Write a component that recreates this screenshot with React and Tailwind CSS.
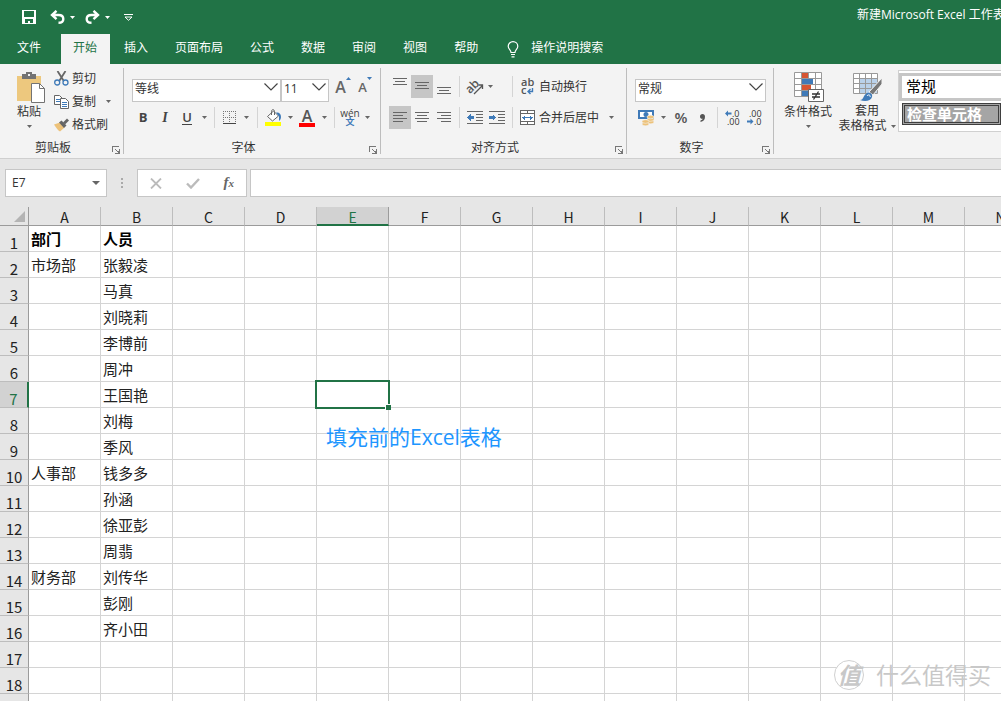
import { useState } from 'react';

const tabs = ['文件', '开始', '插入', '页面布局', '公式', '数据', '审阅', '视图', '帮助'];
const columns = ['A', 'B', 'C', 'D', 'E', 'F', 'G', 'H', 'I', 'J', 'K', 'L', 'M', 'N'];
const rows = [
  ['部门', '人员'],
  ['市场部', '张毅凌'],
  ['', '马真'],
  ['', '刘晓莉'],
  ['', '李博前'],
  ['', '周冲'],
  ['', '王国艳'],
  ['', '刘梅'],
  ['', '季风'],
  ['人事部', '钱多多'],
  ['', '孙涵'],
  ['', '徐亚彭'],
  ['', '周翡'],
  ['财务部', '刘传华'],
  ['', '彭刚'],
  ['', '齐小田'],
  [],
  [],
  [],
];

function Arrow({ className = '' }) {
  return (
    <svg className={`shrink-0 ${className}`} width="5" height="3" viewBox="0 0 5 3" fill="currentColor">
      <path d="M0 0h5L2.5 3z" />
    </svg>
  );
}

function ArrowButton({ label, className = 'w-3' }) {
  return (
    <button aria-label={label} className={`flex h-full shrink-0 items-center justify-center text-[#666] ${className}`}>
      <Arrow />
    </button>
  );
}

function ToolButton({ label, className = 'w-[22px]', children }) {
  return (
    <button aria-label={label} className={`flex h-full shrink-0 items-center justify-center ${className}`}>
      {children}
    </button>
  );
}

function Divider({ className = '' }) {
  return <div className={`h-[21px] w-px shrink-0 bg-[#d4d4d4] ${className}`} />;
}

function Combo({ label, value, options, className }) {
  return (
    <div className={`relative h-[23px] shrink-0 ${className}`}>
      <select
        aria-label={label}
        defaultValue={value}
        className="h-full w-full appearance-none border border-[#c6c6c6] bg-white pb-[3px] pl-0.5 text-xs leading-[18px] text-[#333]"
      >
        {options.map((option) => (
          <option key={option}>{option}</option>
        ))}
      </select>
      <svg
        className="pointer-events-none absolute right-[3px] top-[8px]"
        width="14"
        height="8"
        viewBox="0 0 14 8"
        fill="none"
        stroke="#444"
        strokeWidth="1.2"
      >
        <path d="M.5 .5 7 7 13.500 .5" />
      </svg>
    </div>
  );
}

function Group({ title, className, children }) {
  return (
    <section className={`flex shrink-0 flex-col ${className}`}>
      <div className="h-[75px]">{children}</div>
      <div className="flex h-[17px] items-center pr-[3px]">
        <h2 className="flex-1 text-center text-xs text-[#333]">{title}</h2>
        <button aria-label={`${title}设置`} className="mt-1 w-[14px]">
          <svg className="ml-auto" width="8" height="8" viewBox="0 0 8 8" fill="none" stroke="#777" shapeRendering="crispEdges">
            <path d="M.5 6V.5H7" />
            <path d="M3 3l3 3M7.500 3v4.500H3M6.500 5v2" />
          </svg>
        </button>
      </div>
    </section>
  );
}

function GroupLine() {
  return <div className="mt-1 h-[86px] w-px shrink-0 bg-[#bdbdbd]" />;
}

function Lines({ d }) {
  return (
    <svg width="14" height="13" viewBox="0 0 14 13" stroke="#666" shapeRendering="crispEdges">
      <path d={d} />
    </svg>
  );
}

function TitleBar() {
  return (
    <div className="flex h-[34px] items-center overflow-hidden pl-[22px]">
      <button aria-label="保存" className="mr-[14px]">
        <svg width="14" height="14" viewBox="0 0 14 14" fill="#fff" shapeRendering="crispEdges">
          <path fillRule="evenodd" d="M0 0h14v14H0zM2 1v6h10V1zM3 9v4h3v-2h2v2h3V9z" />
        </svg>
      </button>
      <button aria-label="撤销" className="mr-[5px]">
        <svg width="15" height="14" viewBox="0 0 15 14" fill="none" stroke="#fff" strokeWidth="2.400">
          <path d="M6.500 .8 2 5l4.500 4.200M2 5h6.500c3 0 4.800 1.500 4.800 4S11.500 12.800 8.500 12.800" />
        </svg>
      </button>
      <Arrow className="mr-[10px] text-white" />
      <button aria-label="恢复" className="mr-[5px]">
        <svg width="15" height="14" viewBox="0 0 15 14" fill="none" stroke="#fff" strokeWidth="2.400">
          <path d="M8.500 .8 13 5 8.500 9.200M13 5H6.500C3.500 5 1.700 6.500 1.700 9S3.500 12.800 6.500 12.800" />
        </svg>
      </button>
      <Arrow className="mr-[14px] text-white" />
      <button aria-label="自定义快速访问工具栏">
        <svg width="9" height="7" viewBox="0 0 9 7" fill="none" stroke="#fff">
          <path d="M0 .5h9M1 3h7L4.500 6.300z" />
        </svg>
      </button>
      <div className="ml-auto w-36 overflow-hidden whitespace-nowrap pb-1 text-xs text-white">
        新建Microsoft Excel 工作表
      </div>
    </div>
  );
}

function TabBar() {
  const [active, setActive] = useState('开始');

  return (
    <nav className="flex h-[30px] gap-0.5 pl-[5px] text-xs text-white">
      {tabs.map((tab) => (
        <button
          key={tab}
          onClick={() => setActive(tab)}
          className={`shrink-0 pb-0.5 pl-3 pr-[13px] first:mr-[5px] ${
            tab === active ? 'bg-[#f3f3f3] text-[#217346]' : ''
          }`}
        >
          {tab}
        </button>
      ))}
      <button className="ml-[14px] flex shrink-0 items-center gap-3 pb-0.5">
        <svg className="mt-[3px]" width="12" height="17" viewBox="0 0 12 17" fill="none" stroke="#fff" strokeWidth="1.200">
          <path d="M4 11.500C4 9 1.200 8.200 1.200 5.200a4.800 4.600 0 0 1 9.600 0c0 3-2.800 3.800-2.800 6.300zM4 13.500h4M4.500 15.800h3" />
        </svg>
        操作说明搜索
      </button>
    </nav>
  );
}

function ClipboardGroup() {
  return (
    <Group title="剪贴板" className="w-[123px]">
      <div className="flex pl-3">
        <button className="flex w-[34px] flex-col items-center pt-2 text-xs text-[#333]">
          <svg className="ml-[3px]" width="28" height="31" viewBox="0 0 28 31">
            <path d="M0 4h24v25H0z" fill="#edc87e" />
            <path d="M5 2h4V0h6v2h4v5H5z" fill="#737373" />
            <path d="M11 2h2v2h-2z" fill="#f3f3f3" />
            <path d="M14.500 11.500h8l5 5v14h-13z" fill="#fff" stroke="#737373" />
            <path d="M22.500 11.500v5h5" fill="none" stroke="#737373" />
          </svg>
          <span className="leading-[18px]">粘贴</span>
          <Arrow className="mt-1 text-[#666]" />
        </button>
        <div className="flex flex-col pl-2 pt-[3px] text-xs text-[#333]">
          <button className="flex h-[23px] items-center gap-[3px]">
            <svg width="15" height="15" viewBox="0 0 15 15" fill="none">
              <path d="M3.500 0 9.800 10M11.500 0 5.200 10" stroke="#666" strokeWidth="1.800" />
              <circle cx="3.200" cy="11.500" r="2.500" stroke="#3f7ab8" strokeWidth="1.300" />
              <circle cx="11.500" cy="11.500" r="2.500" stroke="#3f7ab8" strokeWidth="1.300" />
            </svg>
            剪切
          </button>
          <div className="flex h-[23px] items-center">
            <button className="flex items-center gap-[3px]">
              <svg width="15" height="14" viewBox="0 0 15 14" fill="#fff" stroke="#666">
                <path d="M.5.500h5l3 3v6h-8z" />
                <path d="M2 4.500h4M2 6.500h4" stroke="#3f7ab8" />
                <path d="M6.500 3.500h5l3 3v7h-8z" />
                <path d="M8 7.500h5M8 9.500h5M8 11.500h5" stroke="#3f7ab8" />
              </svg>
              复制
            </button>
            <ArrowButton label="复制选项" className="ml-[6px] w-3" />
          </div>
          <button className="flex h-[23px] items-center gap-[3px]">
            <svg width="15" height="14" viewBox="0 0 15 14">
              <path d="M0 6.500 6 4.500l4.500 5L6 13.500C4 12.500 2 9.500 0 6.500z" fill="#edc27a" />
              <path d="M5 4.500 7.500 2.500l5 5L10 10z" fill="#666" />
              <path d="M9 4.500 13 .5 15 2.500l-4 4z" fill="#666" />
            </svg>
            格式刷
          </button>
        </div>
      </div>
    </Group>
  );
}

function FontGroup() {
  return (
    <Group title="字体" className="w-[256px]">
      <div className="flex flex-col gap-2 pl-2 pt-[11px] text-[#444]">
        <div className="flex h-[23px] items-center">
          <Combo label="字体" value="等线" options={['等线', '宋体', '黑体']} className="w-[149px]" />
          <Combo label="字号" value="11" options={['10', '11', '12', '14']} className="w-12" />
          <ToolButton label="增大字号" className="ml-[3px] w-[22px]">
            <span className="text-base font-semibold leading-5 text-[#666]">A</span>
            <svg className="mb-4" width="5" height="3" viewBox="0 0 5 3" fill="#3f7ab8">
              <path d="M0 3h5L2.500 0z" />
            </svg>
          </ToolButton>
          <ToolButton label="减小字号">
            <span className="text-[13px] font-semibold leading-5 text-[#666]">A</span>
            <svg className="mb-4" width="5" height="3" viewBox="0 0 5 3" fill="#3f7ab8">
              <path d="M0 0h5L2.500 3z" />
            </svg>
          </ToolButton>
        </div>
        <div className="flex h-[23px] items-center">
          <ToolButton label="加粗">
            <span className="text-[13px] font-bold">B</span>
          </ToolButton>
          <ToolButton label="倾斜">
            <span className="font-['Liberation_Serif',serif] text-sm font-bold italic">I</span>
          </ToolButton>
          <ToolButton label="下划线">
            <span className="border-b border-[#444] text-[13px] font-semibold leading-[14px]">U</span>
          </ToolButton>
          <ArrowButton label="下划线选项" />
          <Divider className="ml-[4px] mr-[3px]" />
          <ToolButton label="边框">
            <svg width="13" height="13" viewBox="0 0 13 13" fill="none" stroke="#777" shapeRendering="crispEdges">
              <path d="M0 .5h13M0 6.500h13M.5 0v12M6.500 0v12M12.500 0v12" strokeDasharray="1 1" />
              <path d="M0 12.500h13" stroke="#444" />
            </svg>
          </ToolButton>
          <ArrowButton label="边框选项" />
          <Divider className="ml-[5px] mr-[4px]" />
          <ToolButton label="填充颜色">
            <svg width="17" height="17" viewBox="0 0 17 17" fill="none">
              <path d="M2.500 7.500 8.500 2l5 5-6 5z" fill="#fff" stroke="#666" />
              <path d="M6.500 6V2.500c0-2.500 3-2.500 3 0V6" stroke="#666" />
              <path d="M11 3.500c3-.5 5 1 5 4.500 0 2-1 3-2 4V7.500z" fill="#3f7ab8" />
              <path d="M0 13h16v4H0z" fill="#ff0" />
            </svg>
          </ToolButton>
          <ArrowButton label="填充颜色选项" />
          <ToolButton label="字体颜色">
            <span className="border-b-4 border-[#f00] px-[3px] text-base font-semibold leading-[14px] text-[#555]">A</span>
          </ToolButton>
          <ArrowButton label="字体颜色选项" />
          <Divider className="ml-[4px] mr-[4px]" />
          <ToolButton label="拼音指南" className="w-[22px] flex-col">
            <span className="text-[10px] leading-[8px]">wén</span>
            <span className="text-[9px] font-bold leading-[10px] text-[#3f7ab8]">文</span>
          </ToolButton>
          <ArrowButton label="拼音选项" />
        </div>
      </div>
    </Group>
  );
}

function AlignGroup() {
  return (
    <Group title="对齐方式" className="w-[245px]">
      <div className="flex flex-col gap-2 pl-2 pt-[11px] text-xs text-[#333]">
        <div className="flex h-[23px] items-center">
          <ToolButton label="顶端对齐">
            <svg width="14" height="17" viewBox="0 0 14 17" stroke="#666" shapeRendering="crispEdges">
              <path d="M0 .5h14M2 3.500h10M0 6.500h14" />
            </svg>
          </ToolButton>
          <ToolButton label="垂直居中" className="w-[22px] bg-[#c6c6c6]">
            <Lines d="M0 2.500h14M2 5.500h10M0 8.500h14" />
          </ToolButton>
          <ToolButton label="底端对齐">
            <svg width="14" height="15" viewBox="0 0 14 15" stroke="#666" shapeRendering="crispEdges">
              <path d="M0 8.500h14M2 11.500h10M0 14.500h14" />
            </svg>
          </ToolButton>
          <Divider className="ml-[4px] mr-[4px]" />
          <ToolButton label="方向">
            <svg className="overflow-visible" width="18" height="16" viewBox="0 0 18 16" fill="none" stroke="#555">
              <text x="0" y="12" transform="rotate(-45 6 9)" fontSize="12" fontWeight="600" fill="#555" stroke="none">
                ab
              </text>
              <path d="M8 15 16 7M12.500 6h4v4" strokeWidth="1.300" />
            </svg>
          </ToolButton>
          <ArrowButton label="方向选项" className="-ml-0.5 w-3" />
          <Divider className="ml-[16px] mr-[7px]" />
          <button className="flex h-full items-center gap-[3px]">
            <svg className="overflow-visible" width="16" height="16" viewBox="0 0 16 16" fill="none">
              <text x="1" y="7" fontSize="11" fontWeight="600" fill="#555">ab</text>
              <text x="1" y="15" fontSize="11" fontWeight="600" fill="#555">c</text>
              <path d="M12.500 9v3.500H8M10.500 10 8 12.500l2.500 2.500" stroke="#3f7ab8" strokeWidth="1.400" />
            </svg>
            自动换行
          </button>
        </div>
        <div className="flex h-[23px] items-center">
          <ToolButton label="左对齐" className="w-[22px] bg-[#c6c6c6]">
            <Lines d="M0 1.500h14M0 4.500h10M0 7.500h14M0 10.500h10" />
          </ToolButton>
          <ToolButton label="居中">
            <Lines d="M0 1.500h14M2 4.500h10M0 7.500h14M2 10.500h10" />
          </ToolButton>
          <ToolButton label="右对齐">
            <Lines d="M0 1.500h14M4 4.500h10M0 7.500h14M4 10.500h10" />
          </ToolButton>
          <Divider className="ml-[4px] mr-[4px]" />
          <ToolButton label="减少缩进量">
            <svg width="16" height="13" viewBox="0 0 16 13" stroke="#666" shapeRendering="crispEdges">
              <path d="M0 .5h16M9 3.500h7M9 6.500h7M9 9.500h7M0 12.500h16" />
              <path d="M0 6.500 4 3v2h3v3H4v2z" fill="#3f7ab8" stroke="none" />
            </svg>
          </ToolButton>
          <ToolButton label="增加缩进量">
            <svg width="16" height="13" viewBox="0 0 16 13" stroke="#666" shapeRendering="crispEdges">
              <path d="M0 .5h16M9 3.500h7M9 6.500h7M9 9.500h7M0 12.500h16" />
              <path d="M7 6.500 4 3v2H0v3h4v2z" fill="#3f7ab8" stroke="none" />
            </svg>
          </ToolButton>
          <Divider className="ml-[4px] mr-[7px]" />
          <button className="flex h-full items-center gap-1">
            <svg width="15" height="15" viewBox="0 0 15 15" fill="#fff" stroke="#666" shapeRendering="crispEdges">
              <path d="M.5.500h14v14H.5zM.5 3.500h14M.5 11.500h14M7.500.500v3M7.500 11.500v3" />
              <path d="M2 7.500h11M4.500 5.500v4M10.500 5.500v4M3.500 6.500v2M11.500 6.500v2" stroke="#3f7ab8" />
            </svg>
            合并后居中
          </button>
          <ArrowButton label="合并选项" className="ml-[6px] w-3" />
        </div>
      </div>
    </Group>
  );
}

function NumberGroup() {
  return (
    <Group title="数字" className="w-[146px]">
      <div className="flex flex-col gap-2 pl-2 pt-[11px] text-[#555]">
        <Combo label="数字格式" value="常规" options={['常规', '数字', '货币']} className="w-[131px]" />
        <div className="flex h-[23px] items-center">
          <ToolButton label="会计数字格式">
            <svg width="16" height="16" viewBox="0 0 16 16">
              <path d="M0 0h16v9H0z" fill="#3f7ab8" />
              <path d="M2 2h12v5H2z" fill="#fff" />
              <circle cx="8" cy="4.500" r="2.500" fill="#3f7ab8" />
              <g fill="#edc27a" stroke="#f3f3f3" strokeWidth=".6">
                <ellipse cx="12.500" cy="12" rx="3.500" ry="1.800" />
                <ellipse cx="12.500" cy="9.500" rx="3.500" ry="1.800" />
                <ellipse cx="12.500" cy="7" rx="3.500" ry="1.800" />
                <ellipse cx="7.500" cy="14" rx="3.500" ry="1.800" />
                <ellipse cx="7.500" cy="11.500" rx="3.500" ry="1.800" />
              </g>
            </svg>
          </ToolButton>
          <ArrowButton label="会计格式选项" />
          <ToolButton label="百分比样式" className="w-6">
            <span className="text-[15px] font-semibold">%</span>
          </ToolButton>
          <ToolButton label="千位分隔样式" className="w-[18px]">
            <svg width="5" height="8" viewBox="0 0 5 8" fill="#555">
              <path d="M2.500 0C4 0 5 1 5 2.800 5 5.500 3.500 7.500.5 8V6.500C2 6 2.500 5.500 2.700 4.800 1 5 0 4 0 2.500 0 1 1 0 2.500 0z" />
            </svg>
          </ToolButton>
          <Divider className="ml-[6px] mr-[4px]" />
          <ToolButton label="增加小数位数">
            <svg className="overflow-visible" width="16" height="15" viewBox="0 0 16 15" fill="#333" fontSize="9">
              <path d="M0 3.500 3 .5v2h3.500v2H3v2z" fill="#3f7ab8" />
              <text x="7" y="7">.0</text>
              <text x="2" y="15">.00</text>
            </svg>
          </ToolButton>
          <ToolButton label="减少小数位数">
            <svg className="overflow-visible" width="16" height="15" viewBox="0 0 16 15" fill="#333" fontSize="9">
              <text x="2" y="7">.00</text>
              <path d="M6.500 11.500 3.500 8.500v2H0v2h3.500v2z" fill="#3f7ab8" />
              <text x="7" y="15">.0</text>
            </svg>
          </ToolButton>
        </div>
      </div>
    </Group>
  );
}

function StyleGroup() {
  return (
    <section className="flex min-w-0 flex-1 items-start overflow-hidden pl-[7px] text-xs text-[#333]">
      <button className="flex w-[54px] shrink-0 flex-col items-center pt-2">
        <svg className="ml-px" width="30" height="30" viewBox="0 0 30 30">
          <path d="M.5.500h27v24H.5zM.5 6.500h27M.5 12.500h27M.5 18.500h27M7.500.500v24M14.500.500v24M21.500.500v24" fill="#fff" stroke="#999" />
          <path d="M8 1h6v5H8zM8 13h9v5H8z" fill="#d65532" />
          <path d="M8 7h11v5H8zM8 19h6v5H8z" fill="#3f7ab8" />
          <path d="M14.500 17.500h15v12h-15z" fill="#fff" stroke="#666" />
          <path d="M18 22h8M18 25h8M24.500 19.500l-5 8" fill="none" stroke="#333" strokeWidth="1.300" />
        </svg>
        <span className="mt-px leading-[18px]">条件格式</span>
        <Arrow className="mt-1 text-[#666]" />
      </button>
      <button className="ml-px flex w-[62px] shrink-0 flex-col items-center pt-[9px]">
        <svg className="ml-0.5" width="30" height="29" viewBox="0 0 30 29">
          <path d="M.5.500h24v20H.5z" fill="#fff" />
          <path d="M7 6h17v14H7z" fill="#b9d1ea" />
          <path d="M.5.500h24v20H.5zM.5 5.500h24M.5 10.500h24M.5 15.500h24M6.500.500v20M12.500.500v20M18.500.500v20" fill="none" stroke="#999" />
          <path d="M29 5v6l-9 11-4-3z" fill="#777" stroke="#f3f3f3" />
          <path d="M7 27c4 0 3-5 7-7 3-1 6 1 5 4-1 4-7 5-12 3z" fill="#3f7ab8" />
          <path d="M14 23c1-2 4-1 3 1" fill="none" stroke="#fff" />
        </svg>
        <span className="leading-[18px]">套用</span>
        <span className="flex items-center gap-1 whitespace-nowrap leading-3">
          表格格式
          <Arrow className="text-[#666]" />
        </span>
      </button>
      <div className="mt-[6px] flex h-[62px] min-w-0 flex-1 flex-col border border-r-0 border-[#d0d0d0] bg-white pt-0.5 text-[15px] text-black">
        <button className="h-7 shrink-0 border-[3px] border-r-0 border-[#c6c6c6] pb-0.5 pl-1 text-left leading-5">常规</button>
        <div className="ml-[3px] mt-0.5 h-[22px] shrink-0 border border-[#3f3f3f] bg-[#a5a5a5] p-px">
          <button className="block h-[18px] w-full border border-[#3f3f3f] pl-0.5 text-left font-bold leading-4 text-white">
            检查单元格
          </button>
        </div>
      </div>
    </section>
  );
}

function FormulaBar() {
  return (
    <div className="flex h-[49px] shrink-0 items-start border-t border-[#cfcfcf] pl-[5px] pt-[10px]">
      <div className="flex h-7 w-[102px] shrink-0 border border-[#c6c6c6] bg-white">
        <input aria-label="名称框" defaultValue="E7" className="w-0 flex-1 pl-1.5 text-xs text-[#333] outline-none" />
        <button aria-label="名称列表" className="w-5 text-[#666]">
          <svg className="mx-auto" width="8" height="4" viewBox="0 0 8 4" fill="currentColor">
            <path d="M0 0h8L4 4z" />
          </svg>
        </button>
      </div>
      <svg className="mx-[14px] mt-[9px] shrink-0" width="2" height="10" viewBox="0 0 2 10" fill="#aaa">
        <path d="M0 0h2v2H0zM0 4h2v2H0zM0 8h2v2H0z" />
      </svg>
      <div className="flex h-7 w-[110px] shrink-0 items-center justify-around border border-[#c6c6c6] bg-white">
        <button aria-label="取消">
          <svg width="12" height="11" viewBox="0 0 12 11" fill="none" stroke="#bbb" strokeWidth="1.800">
            <path d="m1 .5 10 10M11 .5l-10 10" />
          </svg>
        </button>
        <button aria-label="输入">
          <svg width="14" height="11" viewBox="0 0 14 11" fill="none" stroke="#bbb" strokeWidth="2.400">
            <path d="m1 5.500 4 4L13 1" />
          </svg>
        </button>
        <button aria-label="插入函数" className="pb-0.5 font-['Liberation_Serif',serif] text-[15px] font-bold italic leading-4 text-[#666]">
          f<span className="text-[11px]">x</span>
        </button>
      </div>
      <input aria-label="编辑栏" className="ml-[3px] h-7 min-w-0 flex-1 border border-r-0 border-[#c6c6c6] bg-white px-1 outline-none" />
    </div>
  );
}

function Sheet() {
  return (
    <div className="relative min-h-0 flex-1 overflow-hidden bg-white">
      <table className="w-[1037px] table-fixed border-separate border-spacing-0 font-['Noto_Sans_CJK_SC',sans-serif] text-[15px] text-[#222]">
        <thead>
          <tr className="h-[19px] bg-[#e6e6e6]">
            <th className="w-[29px] border-b border-r border-[#9b9b9b] p-0">
              <svg className="ml-auto mr-[3px]" width="11" height="11" viewBox="0 0 11 11" fill="#b4b4b4">
                <path d="M11 0v11H0z" />
              </svg>
            </th>
            {columns.map((col) => (
              <th
                key={col}
                className={`w-[72px] border-r p-0 font-normal ${
                  col === 'E'
                    ? 'border-b-2 border-b-[#217346] border-r-[#9b9b9b] bg-[#d2d2d2] text-[#217346]'
                    : 'border-b border-b-[#9b9b9b] border-r-[#bdbdbd]'
                }`}
              >
                <div className={col === 'E' ? 'h-[17px] text-sm leading-[21px]' : 'h-[18px] text-sm leading-[21px]'}>{col}</div>
              </th>
            ))}
          </tr>
        </thead>
        <tbody>
          {rows.map((row, i) => (
            <tr key={i} className="h-[26px]">
              <th
                className={`border-b border-r border-b-[#bdbdbd] p-0 align-bottom font-normal leading-4 ${
                  i === 6 ? 'border-r-2 border-r-[#217346] bg-[#d2d2d2] text-[#217346]' : 'border-r-[#9b9b9b] bg-[#e6e6e6]'
                }`}
              >
                {i + 1}
              </th>
              {columns.map((col, j) => (
                <td
                  key={col}
                  className={`relative whitespace-nowrap border-b border-r border-[#d4d4d4] p-0 pl-0.5 leading-[22px] ${
                    i === 0 ? 'font-bold text-black' : ''
                  }`}
                >
                  {row[j]}
                  {i === 6 && col === 'E' && (
                    <div className="absolute -inset-0.5 z-10 border-2 border-[#217346]">
                      <div className="absolute -bottom-[3px] -right-[3px] box-content size-[5px] border-l border-t border-white bg-[#217346]" />
                    </div>
                  )}
                </td>
              ))}
            </tr>
          ))}
        </tbody>
      </table>

      {/* Note placed over the cells */}
      <p className="absolute left-[326px] top-[214px] whitespace-nowrap font-['Open_Sans','Noto_Sans_CJK_SC',sans-serif] text-[21px] leading-8 text-[#1e96ff]">
        填充前的Excel表格
      </p>

      {/* Watermark */}
      <div className="absolute bottom-[10px] right-[10px] flex items-center gap-3 text-[#c8c8c8]">
        <span className="flex size-[30px] items-center justify-center rounded-full border border-[#d0d0d0] bg-white text-[23px] font-bold italic leading-none">
          值
        </span>
        <span className="text-[23px] leading-8">什么值得买</span>
      </div>
    </div>
  );
}

export default function App() {
  return (
    <div className="flex h-screen flex-col overflow-hidden bg-[#e6e6e6] font-['Open_Sans','Noto_Sans_CJK_SC',sans-serif]">
      <header className="shrink-0 bg-[#217346]">
        <TitleBar />
        <TabBar />
      </header>
      <div className="flex h-[94px] shrink-0 overflow-hidden bg-[#f3f3f3]">
        <ClipboardGroup />
        <GroupLine />
        <FontGroup />
        <GroupLine />
        <AlignGroup />
        <GroupLine />
        <NumberGroup />
        <GroupLine />
        <StyleGroup />
      </div>
      <FormulaBar />
      <Sheet />
    </div>
  );
}
